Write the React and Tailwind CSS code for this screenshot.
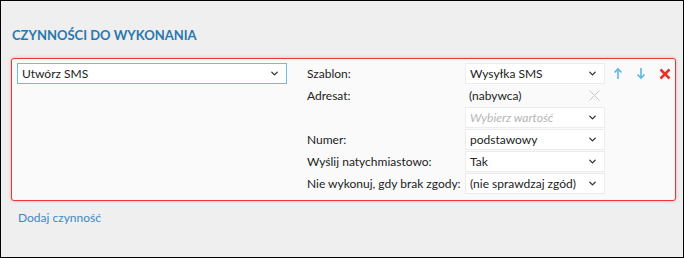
import { ChevronDown } from 'lucide-react'

const font = { fontFamily: 'Lato, "Open Sans", sans-serif' }

function Select({ value, placeholder, focused }) {
  return (
    <div
      className={`flex h-[21px] items-center justify-between bg-white pl-[4px] pr-[6px] ${
        focused ? 'border border-[#6cc0e8]' : 'border border-[#ececec]'
      }`}
    >
      {value ? (
        <span className="whitespace-nowrap text-[12px] leading-none text-[#222]">{value}</span>
      ) : (
        <span className="whitespace-nowrap text-[12px] italic leading-none text-[#b5b5b5]">{placeholder}</span>
      )}
      <ChevronDown size={11} strokeWidth={3} className="text-[#333]" />
    </div>
  )
}

function Label({ children }) {
  return <div className="flex h-[21px] items-center whitespace-nowrap text-[12px] text-[#222]">{children}</div>
}

function ArrowUp() {
  return (
    <svg width="10" height="13" viewBox="0 0 10 13" fill="none" stroke="#5ab6e4" strokeWidth="1.6">
      <path d="M5 12V2" />
      <path d="M1.5 5.5 5 2l3.5 3.5" />
    </svg>
  )
}

function ArrowDown() {
  return (
    <svg width="10" height="13" viewBox="0 0 10 13" fill="none" stroke="#5ab6e4" strokeWidth="1.6">
      <path d="M5 1v10" />
      <path d="M1.5 7.5 5 11l3.5-3.5" />
    </svg>
  )
}

function RedX() {
  return (
    <svg width="12" height="12" viewBox="0 0 12 12" stroke="#e8302c" strokeWidth="2.6">
      <path d="M1.5 1.5l9 9M10.5 1.5l-9 9" />
    </svg>
  )
}

export default function App() {
  return (
    <div className="h-[258px] w-[684px] border border-black bg-[#efefef]" style={font}>
      <h2 className="pl-[11px] pt-[25px] text-[13px] font-bold leading-[18px] text-[#2878ae]">
        CZYNNOŚCI DO WYKONANIA
      </h2>

      <div className="ml-[10px] mt-[14px] w-[665px] rounded-[3px] border border-[#e8383a] bg-[#fafafa] pb-[6px] pl-[5px] pt-[4px] shadow-[0_0_3px_rgba(232,56,58,0.45)]">
        <div className="flex">
          <div className="w-[270px]">
            <Select value="Utwórz SMS" focused />
          </div>

          <div className="ml-[20px] grid grid-cols-[158px_140px] gap-y-[1px]">
            <Label>Szablon:</Label>
            <Select value="Wysyłka SMS" />

            <Label>Adresat:</Label>
            <div className="flex h-[21px] items-center justify-between pl-[4px] pr-[5px]">
              <span className="text-[12px] text-[#222]">(nabywca)</span>
              <svg width="11" height="11" viewBox="0 0 11 11" stroke="#c8c8c8" strokeWidth="1">
                <path d="M0.5 0.5l10 10M10.5 0.5l-10 10" />
              </svg>
            </div>

            <div />
            <Select placeholder="Wybierz wartość" />

            <Label>Numer:</Label>
            <Select value="podstawowy" />

            <Label>Wyślij natychmiastowo:</Label>
            <Select value="Tak" />

            <Label>Nie wykonuj, gdy brak zgody:</Label>
            <Select value="(nie sprawdzaj zgód)" />
          </div>

          <div className="ml-[7px] flex h-[21px] items-center gap-[13px] pl-[1px]">
            <ArrowUp />
            <ArrowDown />
            <RedX />
          </div>
        </div>
      </div>

      <div className="pl-[17px] pt-[8px] text-[12px] text-[#3d88c4]">Dodaj czynność</div>
    </div>
  )
}
